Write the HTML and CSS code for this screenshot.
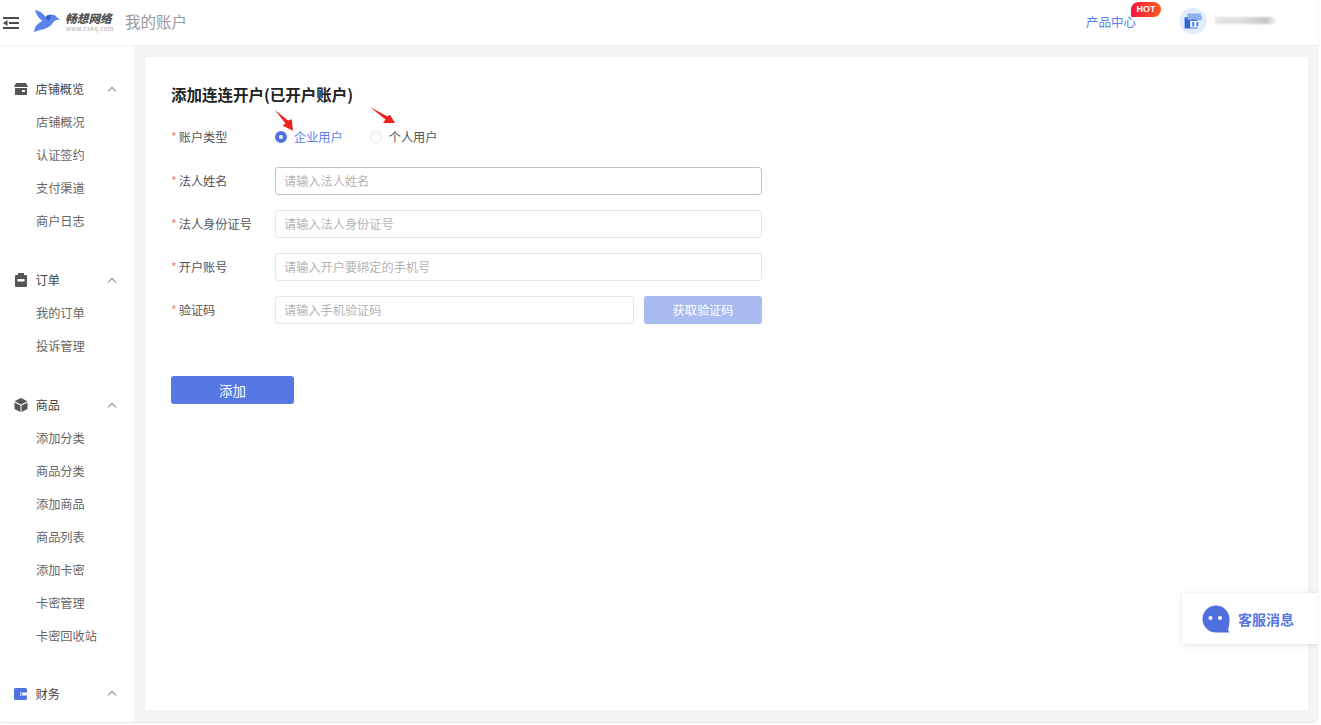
FILE: index.html
```html
<!DOCTYPE html>
<html lang="zh-CN">
<head>
<meta charset="utf-8">
<title>我的账户</title>
<link rel="stylesheet" href="styles.css">
</head>
<body>
<div class="app">
  <header class="topbar">
    <svg class="menu-icon" viewBox="0 0 16 12"><path d="M0 1h16M6 6h10M0 11h16" stroke="#4a4a4a" stroke-width="2.200" fill="none"/><path d="M4.500 3L0 6l4.500 3z" fill="#4a4a4a"/></svg>
    <svg class="bird" viewBox="0 0 26 22"><path d="M1 0C5 .5 9 3 11.500 7 13 5.500 15 4.500 17.500 5 19.500 4.500 22 5.500 23 7.500L26 9.500 22.500 10C20.500 10.500 19.500 12 18 14 15 18 9 19.500 6 20 4 20.500 2 21.500 0 22 .5 18 2 15 5 13 7 11.500 8.500 11 8.500 11 4.500 8.500 2 4 1 0z" fill="#5a84ec"/><path d="M11.500 7C13 5.500 15 4.500 17.500 5L15 10.500C13 10 12 8.500 11.500 7z" fill="#3d5fcb"/></svg>
    <div class="brand">
      <span class="brand-name">畅想网络</span>
      <span class="brand-url">www.cxkq.com</span>
    </div>
    <div class="page-title">我的账户</div>
    <div class="top-right">
      <div class="product">产品中心<span class="hot">HOT</span></div>
      <svg class="avatar" viewBox="0 0 30 30"><circle cx="15" cy="15" r="14.500" fill="#e3ecfb"/><path d="M6 11h14v12H6z" fill="#2f66e0"/><path d="M9 7h14l2 6-2.500 1.500L20 13l-2.500 1.500L15 13l-2.500 1.500L9 13z" fill="#8fb0f0"/><path d="M12 15h10v7H12z" fill="#fff"/><path d="M14 16h2.500v5H14zM18.500 16H21v5h-2.500z" fill="#5b8af0"/></svg>
      <div class="user-blur"></div>
    </div>
  </header>
  <div class="body">
    <nav class="sidebar">
      <section class="group">
        <div class="group-head">
          <svg class="g-icon" viewBox="0 0 14 14"><path d="M2 1h10l2 4H0z" fill="#555"/><path d="M1 6h12v7H1z" fill="#555"/><path d="M8 8h3v2H8z" fill="#fff"/></svg>
          <span class="g-name">店铺概览</span><span class="chev"></span>
        </div>
        <a class="item">店铺概况</a><a class="item">认证签约</a><a class="item">支付渠道</a><a class="item">商户日志</a>
      </section>
      <section class="group">
        <div class="group-head">
          <svg class="g-icon" viewBox="0 0 14 14"><path d="M4 0h6v2h2a1 1 0 0 1 1 1v10a1 1 0 0 1-1 1H2a1 1 0 0 1-1-1V3a1 1 0 0 1 1-1h2z" fill="#555"/><path d="M3.500 6h7v2.500h-7z" fill="#fff"/></svg>
          <span class="g-name">订单</span><span class="chev"></span>
        </div>
        <a class="item">我的订单</a><a class="item">投诉管理</a>
      </section>
      <section class="group group-long">
        <div class="group-head">
          <svg class="g-icon" viewBox="0 0 14 14"><path d="M7 0l6.500 3.200L7 6.500.5 3.200z" fill="#555"/><path d="M.5 4.500L6.500 7.500V14L.5 11zM13.500 4.500L7.500 7.500V14l6-3z" fill="#555"/></svg>
          <span class="g-name">商品</span><span class="chev"></span>
        </div>
        <a class="item">添加分类</a><a class="item">商品分类</a><a class="item">添加商品</a><a class="item">商品列表</a><a class="item">添加卡密</a><a class="item">卡密管理</a><a class="item">卡密回收站</a>
      </section>
      <section class="group">
        <div class="group-head">
          <svg class="g-icon" viewBox="0 0 14 14"><rect y="1" width="13" height="12" rx="1.500" fill="#4f72e0"/><path d="M6 5.500h7v3H6z" fill="#fff"/><circle cx="7.500" cy="7" r="1" fill="#4f72e0"/></svg>
          <span class="g-name">财务</span><span class="chev"></span>
        </div>
      </section>
    </nav>
    <main class="content">
      <div class="card">
        <h1 class="card-title">添加连连开户(已开户账户)</h1>
        <form class="form">
          <div class="row radio-row">
            <label class="label"><i>*</i>账户类型</label>
            <div class="radios">
              <span class="radio on"><span class="dot"></span>企业用户<svg class="arrow" viewBox="0 0 19 21"><path d="M0 0L13 10.500 16.700 9.300 18 20.700 7.500 15.500 10.500 13.500z" fill="#f0201c"/></svg></span>
              <span class="radio"><span class="dot"></span>个人用户<svg class="arrow arrow2" viewBox="0 0 26 17"><path d="M0 0L17.500 9.500 20 7.700 25 16 13 16 15.500 12.500z" fill="#f0201c"/></svg></span>
            </div>
          </div>
          <div class="row">
            <label class="label"><i>*</i>法人姓名</label>
            <input class="input focus" placeholder="请输入法人姓名">
          </div>
          <div class="row">
            <label class="label"><i>*</i>法人身份证号</label>
            <input class="input" placeholder="请输入法人身份证号">
          </div>
          <div class="row">
            <label class="label"><i>*</i>开户账号</label>
            <input class="input" placeholder="请输入开户要绑定的手机号">
          </div>
          <div class="row">
            <label class="label"><i>*</i>验证码</label>
            <div class="code-wrap">
              <input class="input code" placeholder="请输入手机验证码">
              <button type="button" class="code-btn">获取验证码</button>
            </div>
          </div>
          <button type="button" class="submit">添加</button>
        </form>
      </div>
      <aside class="service">
        <svg class="service-icon" viewBox="0 0 28 28"><path d="M14 .5C6.500.5.500 6.500.5 14S6.500 27.500 14 27.500h13.500l-1.500-2.500c1-3 1.500-7 1.500-11C27.500 6.500 21.500.5 14 .5z" fill="#4f6fdc"/><circle cx="8.500" cy="13" r="2" fill="#fff"/><circle cx="18" cy="13" r="2" fill="#fff"/></svg>
        <span>客服消息</span>
      </aside>
    </main>
  </div>
</div>
</body>
</html>
```
FILE: styles.css
```css
* { box-sizing: border-box; }
html, body { margin: 0; height: 100%; background: #fff; overflow: hidden; }
body { font-family: "Noto Sans CJK SC", "Liberation Sans", sans-serif; color: #555; font-size: 12.200px; }
.app { width: 1318px; height: 722px; display: flex; flex-direction: column; background: #f5f5f6; border-radius: 0 0 6px 0; box-shadow: 0 1px 2px rgba(0,0,0,.12); overflow: hidden; }
.topbar { height: 46px; flex: none; background: #fff; display: flex; align-items: center; border-bottom: 1px solid #f0f0f0; padding-left: 3px; }
.menu-icon { width: 16px; height: 12px; margin-right: 15px; margin-top: 1px; }
.bird { width: 26px; height: 22px; margin-right: 5px; margin-top: -3px; }
.brand { display: flex; flex-direction: column; width: 60px; line-height: 1; margin-top: -1px; }
.brand-name { font-size: 11.700px; font-weight: 900; font-style: italic; color: #555; white-space: nowrap; }
.brand-url { font-size: 6px; color: #aaa; letter-spacing: .45px; margin-top: 2px; margin-left: 1px; white-space: nowrap; }
.page-title { font-size: 15.500px; color: #999; margin-top: -3px; }
.top-right { margin-left: auto; display: flex; align-items: center; padding-right: 43px; margin-top: -3px; }
.product { position: relative; color: #5b7fe6; font-size: 12.500px; margin-right: 43px; }
.hot { position: absolute; left: 45px; top: -10px; width: 30px; height: 15px; border-radius: 8px 8px 8px 1px; background: linear-gradient(90deg, #f5153f, #fb5a1e); color: #fff; font: 700 9px/15px "Liberation Sans", sans-serif; text-align: center; }
.avatar { width: 28px; height: 28px; margin-right: 8px; }
.user-blur { width: 60px; height: 7px; background: linear-gradient(90deg, #e6e6e6, #dcdcdc 50%, #c4c4c4 85%, #f0f0f0); filter: blur(1px); margin-top: -1px; }
.body { flex: 1; display: flex; min-height: 0; }
.sidebar { width: 134px; flex: none; background: #fff; padding-top: 26.500px; overflow: hidden; }
.group { margin-bottom: 26px; }
.group-long { margin-bottom: 24.500px; }
.group-head { height: 33px; display: flex; align-items: center; padding-left: 14px; color: #444; }
.g-icon { width: 14px; height: 14px; margin-right: 7.500px; }
.g-name { flex: 1; }
.chev { width: 6px; height: 6px; border-left: 1px solid #888; border-top: 1px solid #888; transform: rotate(45deg); margin: 3px 19px 0 0; }
.item { display: block; height: 33px; line-height: 33px; padding-left: 36px; color: #666; }
.content { flex: 1; position: relative; padding: 11px 10px 12px 11px; min-width: 0; }
.card { height: 100%; background: #fff; padding: 25px 26px 0; box-shadow: 0 0 4px rgba(0,0,0,.04); }
.card-title { margin: 0 0 19px; font-size: 15.500px; line-height: 24px; font-weight: 700; color: #222; }
.form { width: 591px; }
.row { display: flex; align-items: center; height: 28px; margin-bottom: 15px; }
.radio-row { height: 24px; margin-bottom: 18px; }
.label { width: 104px; flex: none; color: #555; }
.label i { color: #ee7a70; font-style: normal; margin-right: 2px; }
.radios { display: flex; gap: 27px; }
.radio { position: relative; display: flex; align-items: center; color: #555; }
.radio.on { color: #5b7fe6; }
.dot { width: 12px; height: 12px; border-radius: 50%; border: 1px solid #e4e6ee; margin-right: 7px; background: #fff; }
.radio.on .dot { border: 4px solid #4f72e0; }
.arrow { position: absolute; left: 0; top: -18px; width: 19px; height: 21px; }
.arrow2 { top: -21px; width: 26px; height: 17px; }
.input { flex: 1; min-width: 0; width: 100%; height: 28px; border: 1px solid #e4e6ee; border-radius: 3px; padding: 0 8px; font: inherit; color: #555; background: #fff; outline: none; }
.input.focus { border-color: #c4c4c4; }
.input::placeholder { color: #b4b4b4; opacity: 1; }
.code-wrap { flex: 1; display: flex; gap: 10px; }
.code-btn { width: 118px; flex: none; height: 28px; border: 0; border-radius: 3px; background: #a9bbf0; color: #fff; font: inherit; }
.submit { display: block; margin-top: 52px; width: 123px; height: 28px; border: 0; border-radius: 3px; background: #5578e2; color: #fff; font: inherit; font-size: 13.500px; }
.service { position: absolute; right: 0; top: 547px; width: 136px; height: 51px; background: #fff; box-shadow: 0 1px 6px rgba(0,0,0,.12); display: flex; align-items: center; padding-left: 20px; color: #5578e2; font-size: 14px; font-weight: 700; }
.service-icon { width: 28px; height: 28px; margin-right: 8px; }
```
